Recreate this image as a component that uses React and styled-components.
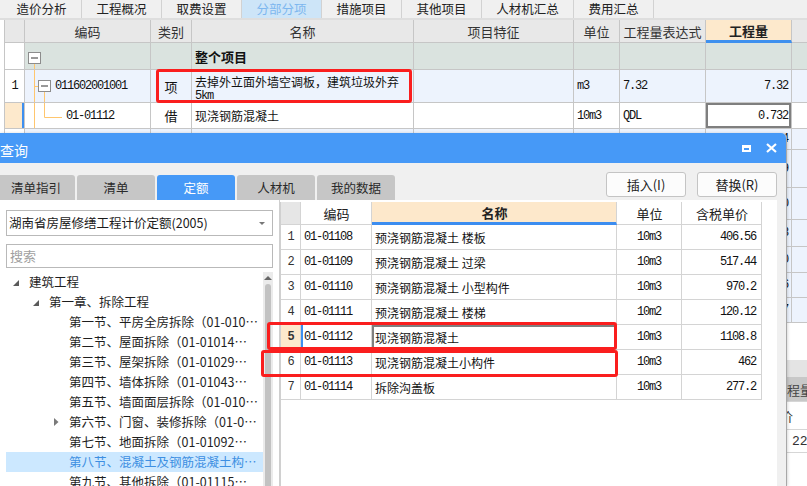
import styled, { createGlobalStyle } from "styled-components";

const MONO = `"Liberation Mono", "DejaVu Sans Mono", "Noto Sans CJK SC", monospace`;
const SANS = `"Noto Sans CJK SC", "Noto Sans", sans-serif`;

const GlobalStyle = createGlobalStyle`
  *, *::before, *::after { box-sizing: border-box; }
  html, body { margin: 0; padding: 0; background: #fff; overflow: hidden; }
  body { font-family: ${SANS}; font-size: 12px; color: #111; }
`;

const Screen = styled.div`
  position: relative;
  width: 807px;
  height: 486px;
  overflow: hidden;
  background: #fff;
`;

/* ---------- background window ---------- */

const AppTabs = styled.div`
  display: flex;
  height: 20px;
  padding-left: 2px;
  background: #f0f0f0;
  border-bottom: 2px solid #dedede;
`;

const AppTab = styled.div`
  width: ${(p) => p.$w || 80}px;
  border-right: 1px solid #d2d2d2;
  text-align: center;
  font-size: 12.5px;
  line-height: 17px;
  color: ${(p) => (p.$active ? "#7db7ef" : "#222")};
  background: ${(p) => (p.$active ? "#cde5f8" : "#f0f0f0")};
`;

const topCols = "20px 126px 41px 222px 160px 46px 86px 86px 90px";

const TopTable = styled.div`
  margin-left: 4px;
  border-left: 1px solid #c6c6c6;
`;

const TRow = styled.div`
  position: relative;
  display: grid;
  grid-template-columns: ${topCols};
  height: ${(p) => p.$h}px;
  background: ${(p) => p.$bg || "#fff"};
`;

const TCell = styled.div`
  position: relative;
  display: flex;
  align-items: center;
  justify-content: ${(p) =>
    p.$align === "right" ? "flex-end" : p.$align === "center" ? "center" : "flex-start"};
  padding: 0 3px 0 ${(p) => p.$pl ?? 3}px;
  border-right: 1px solid #c6c6c6;
  border-bottom: 1px solid #c6c6c6;
  background: ${(p) => p.$bg || "transparent"};
  font-family: ${(p) => (p.$mono ? MONO : "inherit")};
  font-size: 12px;
  letter-spacing: ${(p) => (p.$mono ? "-1.2px" : "0")};
  font-weight: ${(p) => (p.$bold ? 700 : 400)};
  color: #111;
  white-space: nowrap;
  overflow: hidden;
  box-shadow: ${(p) => p.$shadow || "none"};
`;

const THead = styled(TCell)`
  justify-content: center;
  font-size: 13px;
  color: ${(p) => (p.$bold ? "#222" : "#333")};
  border-bottom: ${(p) => (p.$accent ? "3px solid #3e90ee" : "1px solid #c6c6c6")};
`;

const NameCell = styled(TCell)`
  flex-direction: column;
  align-items: flex-start;
  justify-content: flex-start;
  padding-top: 5px;
  line-height: 14px;
`;

const Km = styled.span`
  font-family: ${MONO};
  font-size: 12px;
  letter-spacing: -1.2px;
`;

const Lines = styled.svg`
  position: absolute;
  left: 0;
  top: 0;
  pointer-events: none;
`;

const RedMark = styled.div`
  position: absolute;
  left: ${(p) => p.$x}px;
  top: ${(p) => p.$y}px;
  width: ${(p) => p.$w}px;
  height: ${(p) => p.$h}px;
  border: 3px solid #fa1e1e;
  border-radius: 3px;
  pointer-events: none;
  z-index: 3;
`;

const BottomPane = styled.div`
  margin-top: 37px;
`;

const BottomStrip = styled.div`
  height: 17px;
  background: #e4e4e4;
`;

const BRow = styled.div`
  display: grid;
  grid-template-columns: ${(p) => p.$cols};
  height: ${(p) => p.$h}px;
  background: ${(p) => p.$bg || "#fff"};
  border-bottom: 1px solid #d6d6d6;
`;

const BCell = styled.div`
  display: flex;
  align-items: center;
  justify-content: ${(p) => (p.$right ? "flex-end" : "flex-start")};
  font-size: 13px;
  color: #333;
  font-family: ${(p) => (p.$mono ? MONO : "inherit")};
  white-space: nowrap;
  overflow: hidden;
`;

const MinusBox = ({ x, y }) => (
  <g>
    <rect x={x + 0.5} y={y + 0.5} width="12" height="11" fill="#fff" stroke="#8c8c8c" />
    <line x1={x + 3} y1={y + 6} x2={x + 10} y2={y + 6} stroke="#333" />
  </g>
);

const LINE = "#ffc66e";

const TreeRoot = () => (
  <Lines width="60" height="27">
    <line x1="9.5" y1="20" x2="9.5" y2="27" stroke={LINE} />
    <MinusBox x={3} y={9} />
  </Lines>
);

const TreeItem = () => (
  <Lines width="60" height="33">
    <line x1="9.5" y1="0" x2="9.5" y2="33" stroke={LINE} />
    <line x1="9.5" y1="16.5" x2="13" y2="16.5" stroke={LINE} />
    <line x1="19.5" y1="22" x2="19.5" y2="33" stroke={LINE} />
    <MinusBox x={13} y={10} />
  </Lines>
);

const TreeLeaf = () => (
  <Lines width="60" height="26">
    <line x1="9.5" y1="0" x2="9.5" y2="26" stroke={LINE} />
    <line x1="19.5" y1="0" x2="19.5" y2="14.5" stroke={LINE} />
    <line x1="19.5" y1="14.5" x2="37" y2="14.5" stroke={LINE} />
  </Lines>
);

const hiddenRows = [
  [21, "21.4"],
  [38, "3.29"],
  [32, "10.0"],
  [27, "6.48"],
  [26, "2.10"],
  [25, "0.756"],
  [25, "1.37"],
];

const BLUE_ROW = "#edf3fd";

const Background = () => (
  <>
    <AppTabs>
      <AppTab>造价分析</AppTab>
      <AppTab>工程概况</AppTab>
      <AppTab>取费设置</AppTab>
      <AppTab $active>分部分项</AppTab>
      <AppTab>措施项目</AppTab>
      <AppTab>其他项目</AppTab>
      <AppTab $w={92}>人材机汇总</AppTab>
      <AppTab>费用汇总</AppTab>
    </AppTabs>

    <TopTable>
      <TRow $h={23} $bg="#e8e8e8">
        <THead />
        <THead>编码</THead>
        <THead>类别</THead>
        <THead>名称</THead>
        <THead>项目特征</THead>
        <THead>单位</THead>
        <THead>工程量表达式</THead>
        <THead $bold $accent $bg="#fde9cc">工程量</THead>
        <THead>综合单价</THead>
      </TRow>

      <TRow $h={27} $bg="#dae3df">
        <TCell $bg="#fff" />
        <TCell>
          <TreeRoot />
        </TCell>
        <TCell />
        <TCell $bold style={{ fontSize: 13 }}>整个项目</TCell>
        <TCell />
        <TCell />
        <TCell />
        <TCell />
        <TCell />
      </TRow>

      <TRow $h={33} $bg={BLUE_ROW}>
        <TCell $bg="#fff" $align="center" $mono>1</TCell>
        <TCell $mono $pl={30}>
          <TreeItem />
          011602001001
        </TCell>
        <TCell $align="center" style={{ fontSize: 13 }}>项</TCell>
        <NameCell>
          <span>去掉外立面外墙空调板，建筑垃圾外弃</span>
          <Km>5km</Km>
        </NameCell>
        <TCell />
        <TCell $mono>m3</TCell>
        <TCell $mono>7.32</TCell>
        <TCell $mono $align="right">7.32</TCell>
        <TCell />
        <RedMark $x={151} $y={-1} $w={256} $h={34} />
      </TRow>

      <TRow $h={26}>
        <TCell $bg="#fde9cc" $shadow="inset -2px 0 0 #3d8ff0" />
        <TCell $mono $pl={41}>
          <TreeLeaf />
          01-01112
        </TCell>
        <TCell $align="center" style={{ fontSize: 13 }}>借</TCell>
        <TCell>现浇钢筋混凝土</TCell>
        <TCell />
        <TCell $mono>10m3</TCell>
        <TCell $mono>QDL</TCell>
        <TCell $mono $align="right" $shadow="inset 0 0 0 2px #7f7f7f">0.732</TCell>
        <TCell />
      </TRow>

      {hiddenRows.map(([h, v], i) => (
        <TRow key={i} $h={h} $bg={BLUE_ROW}>
          <TCell $bg="#fff" />
          <TCell />
          <TCell />
          <TCell />
          <TCell />
          <TCell />
          <TCell />
          <TCell $mono $align="right">{v}</TCell>
          <TCell />
        </TRow>
      ))}
    </TopTable>

    <BottomPane>
      <BottomStrip />
      <BRow $cols="774px 90px" $h={25} $bg="#c8c8c8">
        <BCell />
        <BCell style={{ color: "#444" }}>工程量</BCell>
      </BRow>
      <BRow $cols="793px 60px" $h={28}>
        <BCell $right>单价</BCell>
        <BCell />
      </BRow>
      <BRow $cols="792px 60px" $h={23}>
        <BCell />
        <BCell $mono>22</BCell>
      </BRow>
    </BottomPane>
  </>
);

/* ---------- query dialog ---------- */

const Dialog = styled.div`
  position: absolute;
  left: -1px;
  top: 133px;
  bottom: 0;
  width: 788px;
  display: flex;
  flex-direction: column;
  background: #f0f0f0;
  border-right: 1px solid #a8a8a8;
  border-radius: 0 5px 0 0;
  box-shadow: 1px 0 3px rgba(0, 0, 0, 0.15);
  z-index: 2;
`;

const TitleBar = styled.div`
  display: flex;
  align-items: center;
  justify-content: space-between;
  height: 30px;
  padding: 3px 9px 0 1px;
  background: #4699f7;
  color: #fff;
  font-size: 14px;
  border-radius: 0 5px 0 0;
`;

const TitleControls = styled.div`
  display: flex;
  align-items: center;
  gap: 15px;
  margin-top: -3px;
`;

const Toolbar = styled.div`
  display: flex;
  align-items: flex-end;
  justify-content: space-between;
  height: 37px;
  padding-right: 9px;
`;

const TabStrip = styled.div`
  display: flex;
  gap: 2px;
  margin-left: -2px;
`;

const DTab = styled.div`
  width: 78px;
  height: 25px;
  border-radius: 3px 3px 0 0;
  text-align: center;
  font-size: 12.5px;
  line-height: 25px;
  background: ${(p) => (p.$active ? "#4699f7" : "#c6c6c6")};
  color: ${(p) => (p.$active ? "#fff" : "#2a2a2a")};
`;

const ToolButtons = styled.div`
  display: flex;
  gap: 11px;
  margin-bottom: 3px;
`;

const ToolButton = styled.button`
  width: 80px;
  height: 25px;
  padding: 0;
  border: 1px solid #c4c4c4;
  border-radius: 3px;
  background: #fcfcfc;
  font-family: ${SANS};
  font-size: 13px;
  color: #222;
`;

const Body = styled.div`
  position: relative;
  flex: 1;
  min-height: 0;
  display: flex;
  margin-right: 9px;
  background: #fff;
`;

const LeftPane = styled.div`
  width: 281px;
  display: flex;
  flex-direction: column;
  padding: 10px 6px 0 7px;
  border-right: 1px solid #cfcfcf;
  min-height: 0;
`;

const Select = styled.div`
  position: relative;
  height: 26px;
  border: 1px solid #b9b9b9;
  padding-left: 2px;
  font-size: 12.5px;
  line-height: 24px;
  color: #1a1a1a;

  &::after {
    content: "";
    position: absolute;
    right: 7px;
    top: 11px;
    border-left: 3px solid transparent;
    border-right: 3px solid transparent;
    border-top: 3px solid #777;
  }
`;

const Search = styled.div`
  height: 24px;
  margin-top: 8px;
  border: 1px solid #b9b9b9;
  padding-left: 3px;
  font-size: 13px;
  line-height: 22px;
  color: #a0a0a0;
`;

const TreeWrap = styled.div`
  flex: 1;
  min-height: 0;
  display: flex;
  margin-top: 4px;
  overflow: hidden;
`;

const Tree = styled.div`
  flex: 1;
  min-width: 0;
`;

const TreeRow = styled.div`
  position: relative;
  height: 20px;
  padding: 0 4px 0 ${(p) => 23 + p.$level * 20}px;
  font-size: 12.5px;
  line-height: 20px;
  white-space: nowrap;
  overflow: hidden;
  text-overflow: ellipsis;
  color: ${(p) => (p.$selected ? "#3d8fe2" : "#1e1e1e")};
  background: ${(p) => (p.$selected ? "#cce8ff" : "transparent")};
`;

const Caret = styled.svg`
  position: absolute;
  left: ${(p) => 7 + p.$level * 20 + (p.$level === 2 ? 1 : 0)}px;
  top: ${(p) => (p.$open ? 8 : 6)}px;
`;

const ScrollBar = styled.div`
  width: 10px;
  position: relative;
  background: #ebebeb;

  &::before {
    content: "";
    position: absolute;
    left: 1px;
    top: 4px;
    border-left: 4px solid transparent;
    border-right: 4px solid transparent;
    border-bottom: 4px solid #666;
  }
`;

const Thumb = styled.div`
  position: absolute;
  left: 2px;
  right: 2px;
  top: 12px;
  bottom: -10px;
  border-radius: 3px;
  background: #c2c2c2;
`;

const RightPane = styled.div`
  flex: 1;
  padding-top: 2px;
`;

const rCols = "20px 71px 245px 65px 80px";

const RTable = styled.div`
  width: 482px;
  border-left: 1px solid #d0d0d0;
  height: 100%;
`;

const RRow = styled.div`
  display: grid;
  grid-template-columns: ${rCols};
  height: ${(p) => p.$h || 25}px;
`;

const RCell = styled.div`
  display: flex;
  align-items: center;
  justify-content: ${(p) =>
    p.$align === "right" ? "flex-end" : p.$align === "center" ? "center" : "flex-start"};
  padding: 0 ${(p) => (p.$align === "right" ? 5 : 2)}px 0 ${(p) => (p.$align === "center" ? 2 : 3)}px;
  border-right: 1px solid #d4d4d4;
  border-bottom: 1px solid #d4d4d4;
  background: ${(p) => p.$bg || "#fff"};
  font-family: ${(p) => (p.$mono ? MONO : "inherit")};
  font-size: 12px;
  letter-spacing: ${(p) => (p.$mono ? "-1.2px" : "0")};
  font-weight: ${(p) => (p.$bold ? 700 : 400)};
  color: ${(p) => p.$color || "#111"};
  white-space: nowrap;
  overflow: hidden;
  box-shadow: ${(p) => p.$shadow || "none"};
`;

const RHead = styled(RCell)`
  justify-content: center;
  font-family: ${SANS};
  font-size: 13px;
  letter-spacing: 0;
  color: #222;
  border-bottom: ${(p) => (p.$accent ? "3px solid #3c8df0" : "1px solid #d4d4d4")};
`;

const quotas = [
  ["01-01108", "预浇钢筋混凝土 楼板", "10m3", "406.56"],
  ["01-01109", "预浇钢筋混凝土 过梁", "10m3", "517.44"],
  ["01-01110", "预浇钢筋混凝土 小型构件", "10m3", "970.2"],
  ["01-01111", "预浇钢筋混凝土 楼梯", "10m2", "120.12"],
  ["01-01112", "现浇钢筋混凝土", "10m3", "1108.8"],
  ["01-01113", "现浇钢筋混凝土小构件", "10m3", "462"],
  ["01-01114", "拆除沟盖板", "10m3", "277.2"],
];

const tree = [
  { level: 0, text: "建筑工程", caret: "open" },
  { level: 1, text: "第一章、拆除工程", caret: "open" },
  { level: 2, text: "第一节、平房全房拆除（01-01001～01-01013）" },
  { level: 2, text: "第二节、屋面拆除（01-01014～01-01028）" },
  { level: 2, text: "第三节、屋架拆除（01-01029～01-01042）" },
  { level: 2, text: "第四节、墙体拆除（01-01043～01-01052）" },
  { level: 2, text: "第五节、墙面面层拆除（01-01053～01-01070）" },
  { level: 2, text: "第六节、门窗、装修拆除（01-01071～01-01091）", caret: "closed" },
  { level: 2, text: "第七节、地面拆除（01-01092～01-01106）" },
  { level: 2, text: "第八节、混凝土及钢筋混凝土构件拆除（01-01107～01-01114）", selected: true },
  { level: 2, text: "第九节、其他拆除（01-01115～01-01130）" },
];

const QueryDialog = () => (
  <Dialog>
    <TitleBar>
      <span>查询</span>
      <TitleControls>
        <svg width="9" height="7" viewBox="0 0 9 7">
          <path d="M0 0H9V7H0Z M2 3V5H7V3Z" fill="#fff" fillRule="evenodd" />
        </svg>
        <svg width="11" height="10" viewBox="0 0 11 10">
          <path d="M1 1L10 9M10 1L1 9" stroke="#fff" strokeWidth="2.2" />
        </svg>
      </TitleControls>
    </TitleBar>

    <Toolbar>
      <TabStrip>
        <DTab>清单指引</DTab>
        <DTab>清单</DTab>
        <DTab $active>定额</DTab>
        <DTab>人材机</DTab>
        <DTab>我的数据</DTab>
      </TabStrip>
      <ToolButtons>
        <ToolButton>插入(I)</ToolButton>
        <ToolButton>替换(R)</ToolButton>
      </ToolButtons>
    </Toolbar>

    <Body>
      <LeftPane>
        <Select>湖南省房屋修缮工程计价定额(2005)</Select>
        <Search>搜索</Search>
        <TreeWrap>
          <Tree>
            {tree.map((t, i) => (
              <TreeRow key={i} $level={t.level} $selected={t.selected}>
                {t.caret === "open" && (
                  <Caret $level={t.level} $open width="6" height="6" viewBox="0 0 6 6">
                    <path d="M6 0V6H0Z" fill="#5a5a5a" />
                  </Caret>
                )}
                {t.caret === "closed" && (
                  <Caret $level={t.level} width="5" height="8" viewBox="0 0 5 8">
                    <path d="M0 0L4.5 4L0 8Z" fill="#7a7a7a" />
                  </Caret>
                )}
                {t.text}
              </TreeRow>
            ))}
          </Tree>
          <ScrollBar>
            <Thumb />
          </ScrollBar>
        </TreeWrap>
      </LeftPane>

      <RightPane>
        <RTable>
          <RRow $h={23}>
            <RHead $bg="#e6e6e6" />
            <RHead>编码</RHead>
            <RHead $bold $accent $bg="#fde8cb">名称</RHead>
            <RHead>单位</RHead>
            <RHead>含税单价</RHead>
          </RRow>
          {quotas.map(([code, name, unit, price], i) => {
            const cur = i === 4;
            return (
              <RRow key={code}>
                <RCell
                  $align="center"
                  $mono
                  $bold={cur}
                  $bg={cur ? "#fde9cc" : "#fff"}
                  $color="#333"
                >
                  {i + 1}
                </RCell>
                <RCell $mono $shadow={cur ? "inset 2px 0 0 #3d8ff0" : undefined}>
                  {code}
                </RCell>
                <RCell $shadow={cur ? "inset 0 0 0 2px #7f7f7f" : undefined}>{name}</RCell>
                <RCell $mono $align="center">{unit}</RCell>
                <RCell $mono $align="right">{price}</RCell>
              </RRow>
            );
          })}
        </RTable>
      </RightPane>

      <RedMark $x={268} $y={122} $w={350} $h={28} />
      <RedMark $x={262} $y={150} $w={357} $h={27} />
    </Body>
  </Dialog>
);

export default function App() {
  return (
    <Screen>
      <GlobalStyle />
      <Background />
      <QueryDialog />
    </Screen>
  );
}
